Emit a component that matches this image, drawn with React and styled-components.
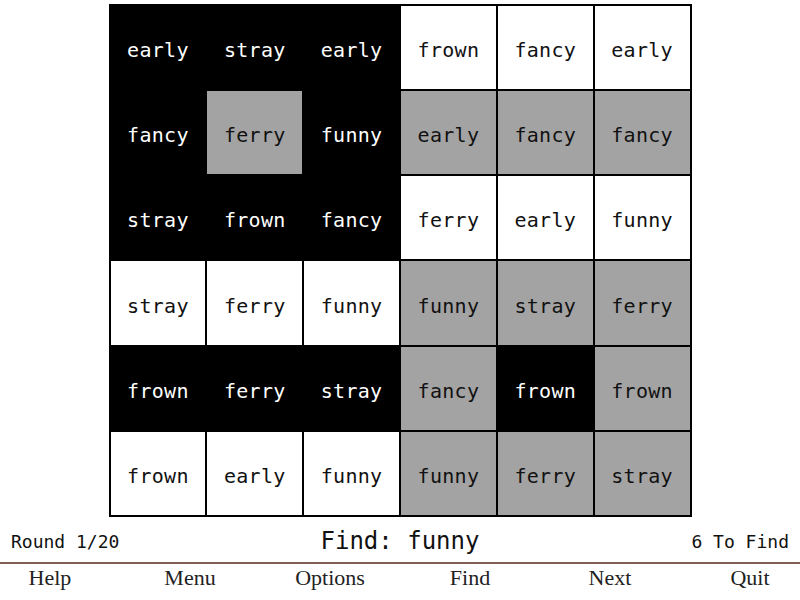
import React from "react";
import styled, { createGlobalStyle } from "styled-components";

const Global = createGlobalStyle`
  html, body {
    margin: 0;
    padding: 0;
    background: #fff;
  }
`;

export const Page = styled.div`
  width: 800px;
  height: 600px;
  display: flex;
  flex-direction: column;
  overflow: hidden;
`;

export const Board = styled.div`
  margin: 4px auto 0 auto;
  width: 583px;
  height: 513px;
  box-sizing: border-box;
  display: grid;
  grid-template-columns: repeat(6, 1fr);
  grid-template-rows: repeat(6, 1fr);
  gap: 2px;
  padding: 2px;
  background: #000;
`;

const bg = { B: "#000", G: "#a3a3a3", W: "#fff" };

export const Cell = styled.div`
  display: flex;
  align-items: center;
  justify-content: center;
  background: ${(p) => bg[p.$tone]};
  color: ${(p) => (p.$tone === "B" ? "#fff" : "#111")};
  font-family: "DejaVu Sans Mono", monospace;
  font-size: 20px;
  letter-spacing: 0.3px;
  padding-top: 5px;
`;

export const Status = styled.div`
  height: 45px;
  display: flex;
  align-items: center;
  justify-content: space-between;
  padding: 3px 11px 0 11px;
  box-sizing: border-box;
  font-family: "DejaVu Sans Mono", monospace;
  color: #111;
`;

export const Side = styled.span`
  font-size: 18px;
  width: 160px;
  text-align: ${(p) => p.$align || "left"};
`;

export const Target = styled.span`
  font-size: 24px;
`;

export const Rule = styled.div`
  height: 2px;
  background: #7d5f58;
`;

export const Menu = styled.div`
  flex: 1;
  display: grid;
  grid-template-columns: repeat(6, 140px);
  justify-content: center;
  justify-items: center;
  align-items: center;
  padding-bottom: 8px;
  font-family: "Liberation Serif", serif;
  font-size: 22px;
  color: #222;
`;

export const MenuItem = styled.span`
  cursor: pointer;
`;

const layout = [
  "BBBWWW",
  "BGBGGG",
  "BBBWWW",
  "WWWGGG",
  "BBBGBG",
  "WWWGGG",
];

const words = [
  ["early", "stray", "early", "frown", "fancy", "early"],
  ["fancy", "ferry", "funny", "early", "fancy", "fancy"],
  ["stray", "frown", "fancy", "ferry", "early", "funny"],
  ["stray", "ferry", "funny", "funny", "stray", "ferry"],
  ["frown", "ferry", "stray", "fancy", "frown", "frown"],
  ["frown", "early", "funny", "funny", "ferry", "stray"],
];

const menu = ["Help", "Menu", "Options", "Find", "Next", "Quit"];

export default function App() {
  return (
    <Page>
      <Global />
      <Board>
        {words.map((row, r) =>
          row.map((w, c) => (
            <Cell key={r + "-" + c} $tone={layout[r][c]}>
              {w}
            </Cell>
          ))
        )}
      </Board>
      <Status>
        <Side>Round 1/20</Side>
        <Target>Find: funny</Target>
        <Side $align="right">6 To Find</Side>
      </Status>
      <Rule />
      <Menu>
        {menu.map((m) => (
          <MenuItem key={m}>{m}</MenuItem>
        ))}
      </Menu>
    </Page>
  );
}
